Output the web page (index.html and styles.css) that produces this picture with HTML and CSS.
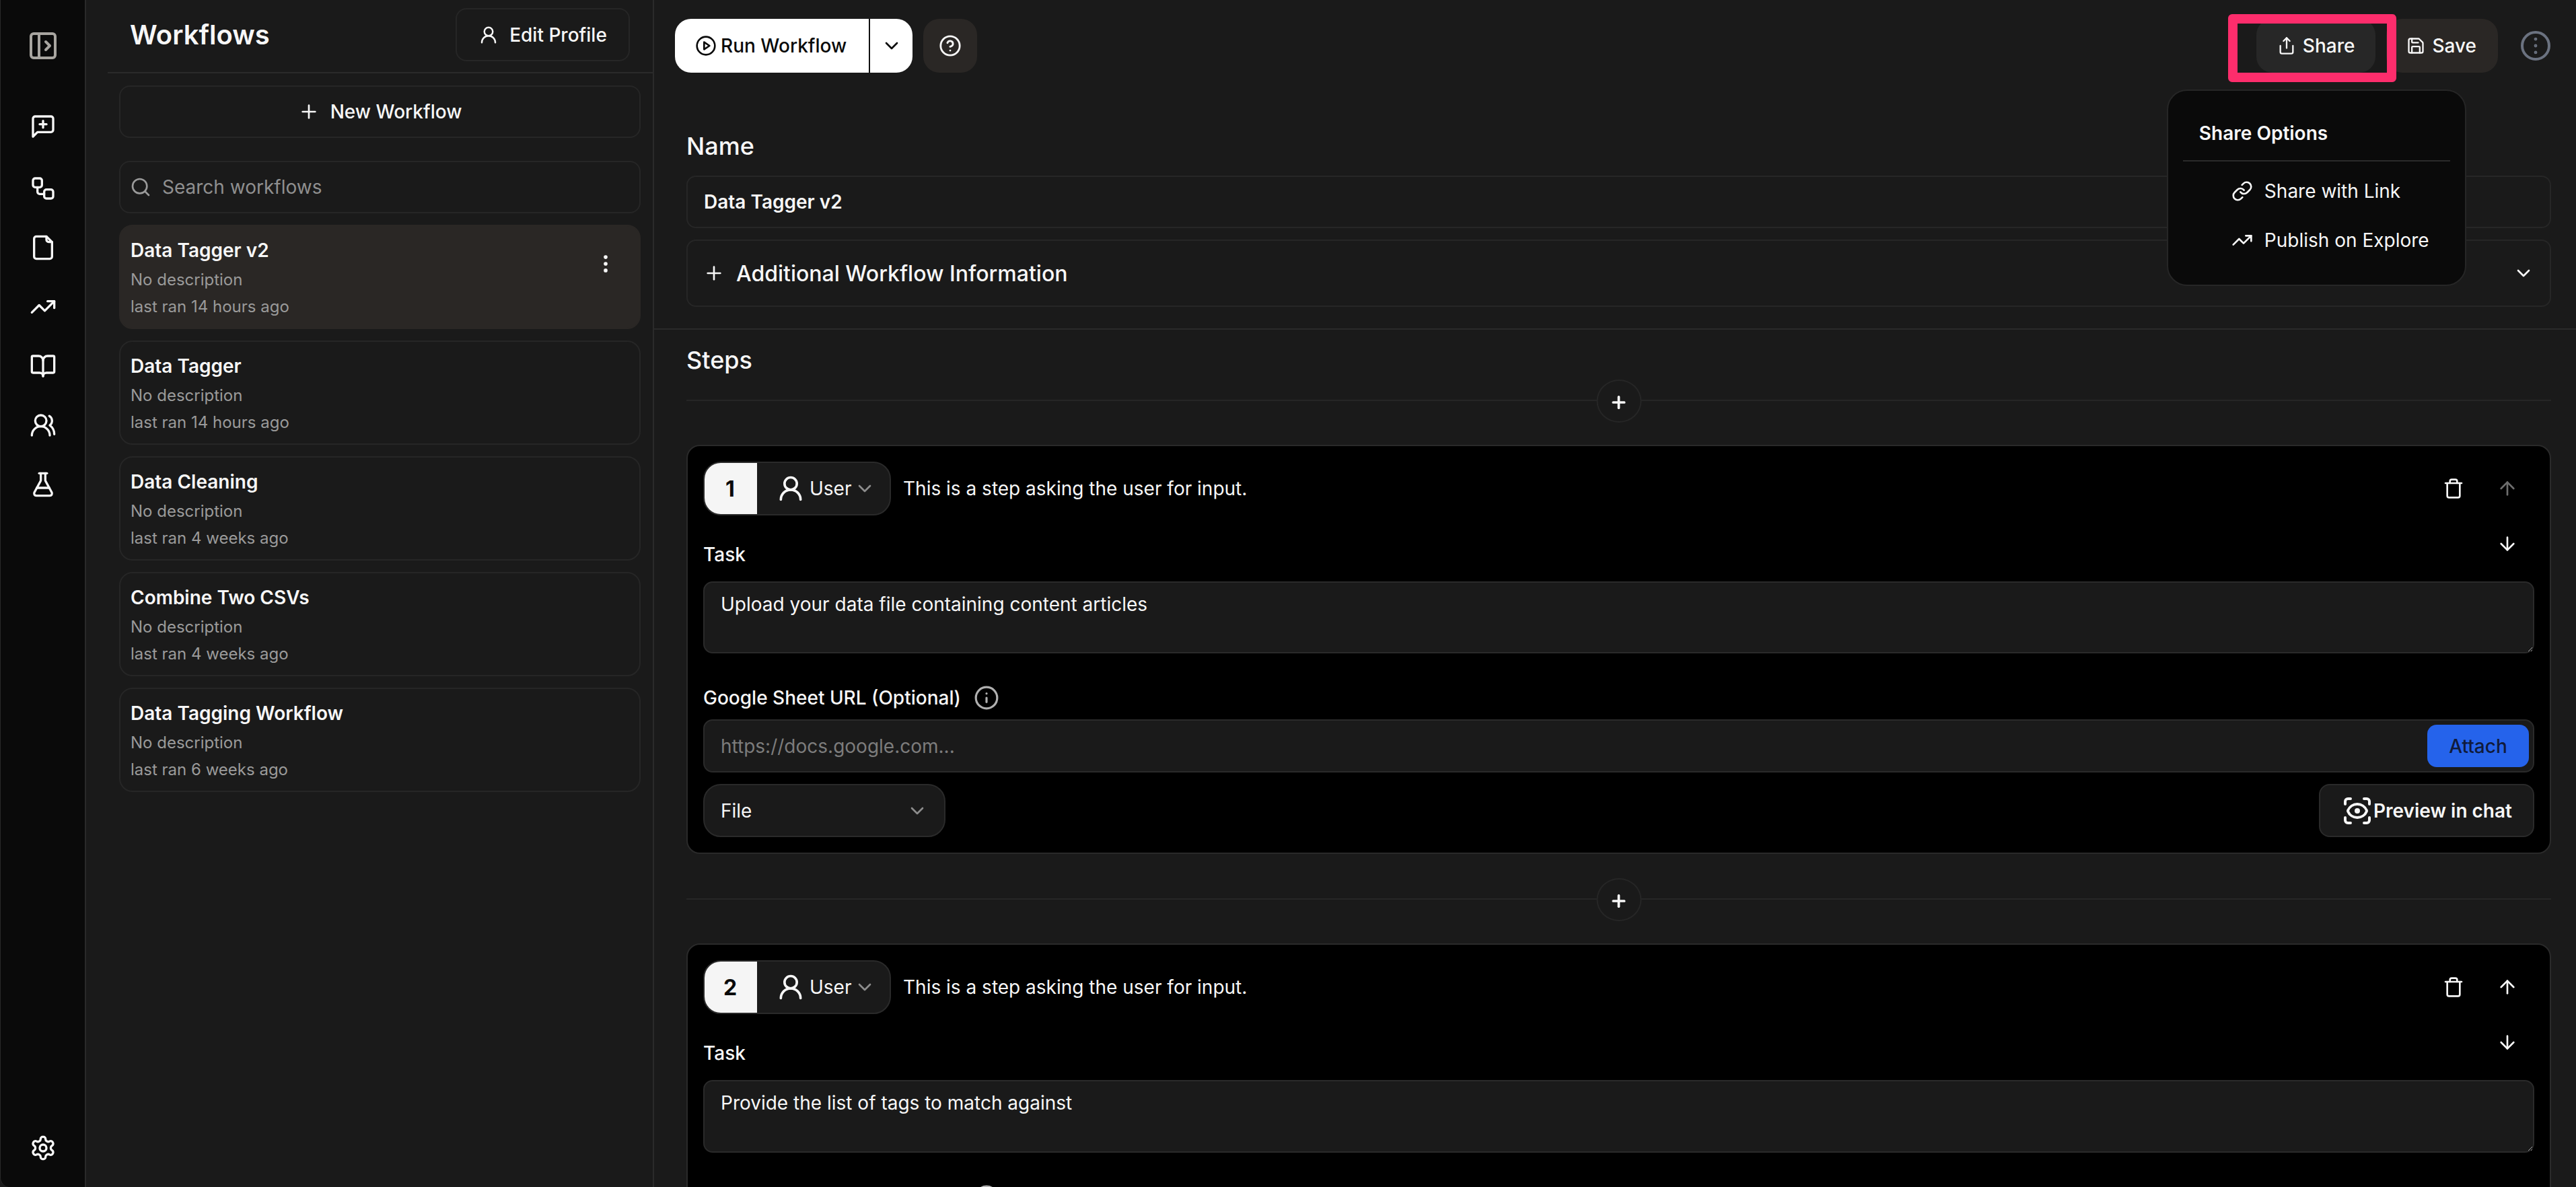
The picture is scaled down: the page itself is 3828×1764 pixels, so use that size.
FILE: index.html
```html
<!DOCTYPE html>
<html lang="en">
<head>
<meta charset="utf-8">
<title>Workflows</title>
<link rel="stylesheet" href="styles.css">
</head>
<body>
<svg class="sprite" xmlns="http://www.w3.org/2000/svg">
  <symbol id="i-panel" viewBox="0 0 24 24"><rect x="3" y="3" width="18" height="18" rx="2"/><path d="M9 3v18"/><path d="m14 9 3 3-3 3"/></symbol>
  <symbol id="i-message" viewBox="0 0 24 24"><path d="M21 15a2 2 0 0 1-2 2H7l-4 4V5a2 2 0 0 1 2-2h14a2 2 0 0 1 2 2z"/><path d="M12 7v6"/><path d="M9 10h6"/></symbol>
  <symbol id="i-workflow" viewBox="0 0 24 24"><rect x="3" y="3" width="8" height="8" rx="2"/><path d="M7 11v4a2 2 0 0 0 2 2h4"/><rect x="13" y="13" width="8" height="8" rx="2"/></symbol>
  <symbol id="i-file" viewBox="0 0 24 24"><path d="M15 2H6a2 2 0 0 0-2 2v16a2 2 0 0 0 2 2h12a2 2 0 0 0 2-2V7Z"/><path d="M15 2v3a2 2 0 0 0 2 2h3"/></symbol>
  <symbol id="i-trend" viewBox="0 0 24 24"><path d="M22 7l-8.500 8.500-5-5L2 17"/><path d="M16 7h6v6"/></symbol>
  <symbol id="i-book" viewBox="0 0 24 24"><path d="M12 7v14"/><path d="M3 18a1 1 0 0 1-1-1V4a1 1 0 0 1 1-1h5a4 4 0 0 1 4 4 4 4 0 0 1 4-4h5a1 1 0 0 1 1 1v13a1 1 0 0 1-1 1h-6a3 3 0 0 0-3 3 3 3 0 0 0-3-3z"/></symbol>
  <symbol id="i-users" viewBox="0 0 24 24"><path d="M18 21a8 8 0 0 0-16 0"/><circle cx="10" cy="8" r="5"/><path d="M22 20c0-3.370-2-6.500-4-8a5 5 0 0 0-.450-8.300"/></symbol>
  <symbol id="i-flask" viewBox="0 0 24 24"><path d="M14 2v6a2 2 0 0 0 .245.960l5.510 10.080A2 2 0 0 1 18 22H6a2 2 0 0 1-1.755-2.960l5.510-10.080A2 2 0 0 0 10 8V2"/><path d="M6.453 15h11.094"/><path d="M8.500 2h7"/></symbol>
  <symbol id="i-gear" viewBox="0 0 24 24"><path d="M12.220 2h-.44a2 2 0 0 0-2 2v.18a2 2 0 0 1-1 1.730l-.43.25a2 2 0 0 1-2 0l-.15-.08a2 2 0 0 0-2.730.73l-.22.38a2 2 0 0 0 .73 2.730l.15.1a2 2 0 0 1 1 1.720v.51a2 2 0 0 1-1 1.740l-.15.09a2 2 0 0 0-.73 2.730l.22.38a2 2 0 0 0 2.730.73l.15-.08a2 2 0 0 1 2 0l.43.25a2 2 0 0 1 1 1.730V20a2 2 0 0 0 2 2h.44a2 2 0 0 0 2-2v-.18a2 2 0 0 1 1-1.730l.43-.25a2 2 0 0 1 2 0l.15.08a2 2 0 0 0 2.730-.73l.22-.39a2 2 0 0 0-.73-2.730l-.15-.08a2 2 0 0 1-1-1.740v-.5a2 2 0 0 1 1-1.740l.15-.09a2 2 0 0 0 .73-2.730l-.22-.38a2 2 0 0 0-2.730-.73l-.15.08a2 2 0 0 1-2 0l-.43-.25a2 2 0 0 1-1-1.730V4a2 2 0 0 0-2-2z"/><circle cx="12" cy="12" r="3"/></symbol>
  <symbol id="i-user" viewBox="0 0 24 24"><circle cx="12" cy="8" r="5"/><path d="M20 21a8 8 0 0 0-16 0"/></symbol>
  <symbol id="i-plus" viewBox="0 0 24 24"><path d="M5 12h14"/><path d="M12 5v14"/></symbol>
  <symbol id="i-search" viewBox="0 0 24 24"><circle cx="11" cy="11" r="8"/><path d="m21 21-4.300-4.300"/></symbol>
  <symbol id="i-dots" viewBox="0 0 24 24"><circle cx="12" cy="12" r="1"/><circle cx="12" cy="5" r="1"/><circle cx="12" cy="19" r="1"/></symbol>
  <symbol id="i-play" viewBox="0 0 24 24"><circle cx="12" cy="12" r="10"/><path d="m10 8 6 4-6 4z"/></symbol>
  <symbol id="i-chevron" viewBox="0 0 24 24"><path d="m6 9 6 6 6-6"/></symbol>
  <symbol id="i-help" viewBox="0 0 24 24"><circle cx="12" cy="12" r="10"/><path d="M9.090 9a3 3 0 0 1 5.830 1c0 2-3 3-3 3"/><path d="M12 17h.01"/></symbol>
  <symbol id="i-share" viewBox="0 0 24 24"><path d="M12 2v13"/><path d="m16 6-4-4-4 4"/><path d="M4 12v8a2 2 0 0 0 2 2h12a2 2 0 0 0 2-2v-8"/></symbol>
  <symbol id="i-save" viewBox="0 0 24 24"><path d="M15.200 3a2 2 0 0 1 1.400.6l3.800 3.800a2 2 0 0 1 .6 1.400V19a2 2 0 0 1-2 2H5a2 2 0 0 1-2-2V5a2 2 0 0 1 2-2z"/><path d="M17 21v-7a1 1 0 0 0-1-1H8a1 1 0 0 0-1 1v7"/><path d="M7 3v4a1 1 0 0 0 1 1h7"/></symbol>
  <symbol id="i-link" viewBox="0 0 24 24"><path d="M10 13a5 5 0 0 0 7.540.54l3-3a5 5 0 0 0-7.070-7.070l-1.720 1.710"/><path d="M14 11a5 5 0 0 0-7.540-.54l-3 3a5 5 0 0 0 7.070 7.070l1.710-1.710"/></symbol>
  <symbol id="i-trash" viewBox="0 0 24 24"><path d="M3 6h18"/><path d="M19 6v14a2 2 0 0 1-2 2H7a2 2 0 0 1-2-2V6"/><path d="M8 6V4a2 2 0 0 1 2-2h4a2 2 0 0 1 2 2v2"/></symbol>
  <symbol id="i-up" viewBox="0 0 24 24"><path d="m5 12 7-7 7 7"/><path d="M12 19V5"/></symbol>
  <symbol id="i-down" viewBox="0 0 24 24"><path d="M12 5v14"/><path d="m19 12-7 7-7-7"/></symbol>
  <symbol id="i-info" viewBox="0 0 24 24"><circle cx="12" cy="12" r="10"/><path d="M12 16v-4"/><path d="M12 8h.01"/></symbol>
  <symbol id="i-eye" viewBox="0 0 24 24"><path d="M3 7V5a2 2 0 0 1 2-2h2"/><path d="M17 3h2a2 2 0 0 1 2 2v2"/><path d="M21 17v2a2 2 0 0 1-2 2h-2"/><path d="M7 21H5a2 2 0 0 1-2-2v-2"/><circle cx="12" cy="12" r="1"/><path d="M18.944 12.330a1 1 0 0 0 0-.66 7.500 7.500 0 0 0-13.888 0 1 1 0 0 0 0 .66 7.500 7.500 0 0 0 13.888 0"/></symbol>
</svg>

<nav class="rail">
  <svg class="icon rail-toggle"><use href="#i-panel"/></svg>
  <svg class="icon rail-icon"><use href="#i-message"/></svg>
  <svg class="icon rail-icon rail-workflow"><use href="#i-workflow"/></svg>
  <svg class="icon rail-icon"><use href="#i-file"/></svg>
  <svg class="icon rail-icon"><use href="#i-trend"/></svg>
  <svg class="icon rail-icon"><use href="#i-book"/></svg>
  <svg class="icon rail-icon"><use href="#i-users"/></svg>
  <svg class="icon rail-icon"><use href="#i-flask"/></svg>
  <svg class="icon rail-icon rail-settings"><use href="#i-gear"/></svg>
</nav>

<aside class="list-panel">
  <header class="list-header">
    <h1 class="list-title">Workflows</h1>
    <button class="btn-outline btn-profile"><svg class="icon icon-30"><use href="#i-user"/></svg>Edit Profile</button>
  </header>
  <div class="list-body">
    <button class="btn-outline btn-new"><svg class="icon icon-32"><use href="#i-plus"/></svg>New Workflow</button>
    <label class="search">
      <svg class="icon icon-32 search-icon"><use href="#i-search"/></svg>
      <input class="search-input" type="text" placeholder="Search workflows">
    </label>
    <div class="wf-items">
      <article class="wf-card wf-card-active">
        <div class="wf-text">
          <div class="wf-name">Data Tagger v2</div>
          <div class="wf-meta">No description</div>
          <div class="wf-meta">last ran 14 hours ago</div>
        </div>
        <svg class="icon icon-dots"><use href="#i-dots"/></svg>
      </article>
      <article class="wf-card">
        <div class="wf-text">
          <div class="wf-name">Data Tagger</div>
          <div class="wf-meta">No description</div>
          <div class="wf-meta">last ran 14 hours ago</div>
        </div>
      </article>
      <article class="wf-card">
        <div class="wf-text">
          <div class="wf-name">Data Cleaning</div>
          <div class="wf-meta">No description</div>
          <div class="wf-meta">last ran 4 weeks ago</div>
        </div>
      </article>
      <article class="wf-card">
        <div class="wf-text">
          <div class="wf-name">Combine Two CSVs</div>
          <div class="wf-meta">No description</div>
          <div class="wf-meta">last ran 4 weeks ago</div>
        </div>
      </article>
      <article class="wf-card">
        <div class="wf-text">
          <div class="wf-name">Data Tagging Workflow</div>
          <div class="wf-meta">No description</div>
          <div class="wf-meta">last ran 6 weeks ago</div>
        </div>
      </article>
    </div>
  </div>
</aside>

<main class="main">
  <div class="topbar">
    <div class="topbar-group">
      <div class="run-split">
        <button class="run-btn"><svg class="icon icon-32"><use href="#i-play"/></svg>Run Workflow</button>
        <button class="run-caret"><svg class="icon icon-32"><use href="#i-chevron"/></svg></button>
      </div>
      <button class="btn-soft btn-help"><svg class="icon icon-34"><use href="#i-help"/></svg></button>
    </div>
    <div class="topbar-group topbar-right">
      <div class="share-wrap">
        <button class="btn-soft btn-share"><svg class="icon icon-28"><use href="#i-share"/></svg>Share</button>
        <div class="highlight"></div>
        <div class="share-menu">
          <div class="share-menu-title">Share Options</div>
          <div class="share-menu-item"><svg class="icon icon-32"><use href="#i-link"/></svg>Share with Link</div>
          <div class="share-menu-item"><svg class="icon icon-32"><use href="#i-trend"/></svg>Publish on Explore</div>
        </div>
      </div>
      <button class="btn-soft btn-save"><svg class="icon icon-28"><use href="#i-save"/></svg>Save</button>
      <button class="btn-more"><svg class="icon more-dots"><use href="#i-dots"/></svg></button>
    </div>
  </div>

  <section class="section section-name">
    <h2 class="section-title">Name</h2>
    <input class="name-input" type="text" value="Data Tagger v2">
    <div class="additional">
      <svg class="icon icon-32"><use href="#i-plus"/></svg>
      <span class="additional-label">Additional Workflow Information</span>
      <svg class="icon icon-32"><use href="#i-chevron"/></svg>
    </div>
  </section>

  <div class="rule"></div>

  <section class="section">
    <h2 class="section-title section-title-steps">Steps</h2>

    <div class="adder adder-first"><button class="adder-btn"><svg class="icon icon-28 icon-bold"><use href="#i-plus"/></svg></button></div>

    <article class="step">
      <div class="step-head">
        <div class="step-pill">
          <span class="step-num">1</span>
          <span class="step-role"><svg class="icon icon-role"><use href="#i-user"/></svg>User<svg class="icon icon-32 role-caret"><use href="#i-chevron"/></svg></span>
        </div>
        <p class="step-desc">This is a step asking the user for input.</p>
        <div class="step-actions">
          <svg class="icon icon-32"><use href="#i-trash"/></svg>
          <svg class="icon icon-32 icon-muted"><use href="#i-up"/></svg>
          <svg class="icon icon-32 step-down"><use href="#i-down"/></svg>
        </div>
      </div>
      <div class="field-label field-label-task">Task</div>
      <textarea class="task-area" readonly>Upload your data file containing content articles</textarea>
      <div class="field-label field-label-url">Google Sheet URL (Optional)<svg class="icon icon-info"><use href="#i-info"/></svg></div>
      <div class="url-box">
        <input class="url-input" type="text" placeholder="https://docs.google.com...">
        <button class="btn-attach">Attach</button>
      </div>
      <div class="step-foot">
        <div class="type-select">File<svg class="icon icon-32 role-caret"><use href="#i-chevron"/></svg></div>
        <button class="btn-preview"><svg class="icon icon-48"><use href="#i-eye"/></svg>Preview in chat</button>
      </div>
    </article>

    <div class="adder"><button class="adder-btn"><svg class="icon icon-28 icon-bold"><use href="#i-plus"/></svg></button></div>

    <article class="step">
      <div class="step-head">
        <div class="step-pill">
          <span class="step-num">2</span>
          <span class="step-role"><svg class="icon icon-role"><use href="#i-user"/></svg>User<svg class="icon icon-32 role-caret"><use href="#i-chevron"/></svg></span>
        </div>
        <p class="step-desc">This is a step asking the user for input.</p>
        <div class="step-actions">
          <svg class="icon icon-32"><use href="#i-trash"/></svg>
          <svg class="icon icon-32"><use href="#i-up"/></svg>
          <svg class="icon icon-32 step-down"><use href="#i-down"/></svg>
        </div>
      </div>
      <div class="field-label field-label-task">Task</div>
      <textarea class="task-area task-area-tall" readonly>Provide the list of tags to match against</textarea>
      <div class="field-label field-label-url">Google Sheet URL (Optional)<svg class="icon icon-info"><use href="#i-info"/></svg></div>
    </article>
  </section>
</main>
</body>
</html>
```

FILE: styles.css
```css
* { box-sizing: border-box; }

html, body {
  margin: 0;
  height: 100%;
  overflow: hidden;
}

body {
  display: flex;
  background: #1a1a1a;
  color: #f7f7f7;
  font-family: Inter, "Liberation Sans", sans-serif;
  font-size: 28px;
  color-scheme: dark;
}

button, input, textarea {
  font: inherit;
  color: inherit;
}

button { cursor: pointer; padding: 0; }

.sprite { display: none; }

.icon {
  flex: none;
  display: block;
  fill: none;
  stroke: currentColor;
  stroke-width: 2;
  stroke-linecap: round;
  stroke-linejoin: round;
}
.icon-28 { width: 28px; height: 28px; }
.icon-30 { width: 30px; height: 30px; }
.icon-32 { width: 32px; height: 32px; }
.icon-34 { width: 34px; height: 34px; }
.icon-48 { width: 48px; height: 48px; }
.icon-bold { stroke-width: 3.2; }
.icon-muted { color: #6e6e6e; }

/* Left rail */
.rail {
  flex: none;
  width: 128px;
  display: flex;
  flex-direction: column;
  align-items: center;
  gap: 48px;
  padding: 44px 0 38px;
  background: #0a0a0a;
  border-right: 2px solid #2a2a2a;
  border-left: 1px solid #2a2a2a;
  border-bottom-left-radius: 14px;
}
.rail-icon { width: 40px; height: 40px; }
.rail-toggle { width: 48px; height: 48px; color: #a8a5a0; margin-bottom: 28px; }
.rail-workflow { margin-top: 4px; }
.rail-settings { margin-top: auto; }

/* Workflow list */
.list-panel {
  flex: none;
  width: 844px;
  border-right: 2px solid #2a2a2a;
}
.list-header {
  height: 109px;
  margin-left: 32px;
  padding: 12px 34px 0 33px;
  display: flex;
  justify-content: space-between;
  border-bottom: 2px solid #2a2a2a;
}
.list-title {
  margin: 0;
  font-size: 40px;
  line-height: 80px;
  font-weight: 600;
}
.btn-outline {
  display: flex;
  align-items: center;
  justify-content: center;
  background: transparent;
  border: 2px solid #262626;
  border-radius: 16px;
  font-weight: 500;
}
.btn-profile {
  width: 259px;
  height: 79px;
  gap: 16px;
}
.list-body {
  padding: 18px 18px 0 49px;
}
.btn-new {
  width: 100%;
  height: 78px;
  gap: 16px;
}
.search {
  margin-top: 34px;
  height: 78px;
  display: flex;
  align-items: center;
  gap: 16px;
  padding: 0 14px;
  border: 2px solid #262626;
  border-radius: 16px;
}
.search-icon { color: #9a9a9a; }
.search-input {
  flex: 1;
  min-width: 0;
  padding: 0;
  border: 0;
  outline: 0;
  background: transparent;
}
.search-input::placeholder { color: #8f8f8f; opacity: 1; }

.wf-items {
  margin-top: 17px;
  display: flex;
  flex-direction: column;
  gap: 17px;
}
.wf-card {
  display: flex;
  justify-content: space-between;
  align-items: flex-start;
  padding: 18px 33px 11px 15px;
  border: 2px solid #262626;
  border-radius: 20px;
}
.wf-card-active {
  background: #2a2725;
  border-color: #2a2725;
}
.wf-name {
  line-height: 36px;
  margin-bottom: 6px;
  font-weight: 600;
}
.wf-meta {
  font-size: 24px;
  line-height: 40px;
  color: #9a9a9a;
}
.icon-dots { width: 34px; height: 34px; margin-top: 21px; }

/* Main */
.main {
  flex: 1;
  min-width: 0;
}
.topbar {
  display: flex;
  justify-content: space-between;
  padding: 28px 38px 0 31px;
}
.topbar-group {
  display: flex;
  align-items: center;
  gap: 16px;
}
.run-split {
  display: flex;
  height: 80px;
  border-radius: 24px;
  overflow: hidden;
  background: #fff;
  color: #0a0a0a;
}
.run-btn {
  display: flex;
  align-items: center;
  gap: 6px;
  padding: 0 33px 0 30px;
  border: 0;
  border-right: 2px solid #111;
  background: transparent;
  font-weight: 500;
}
.run-caret {
  width: 63px;
  display: flex;
  align-items: center;
  justify-content: center;
  border: 0;
  background: transparent;
}
.btn-soft {
  height: 80px;
  display: flex;
  align-items: center;
  justify-content: center;
  gap: 10px;
  border: 0;
  border-radius: 24px;
  background: #2a2725;
  font-weight: 500;
}
.btn-help { width: 80px; }
.btn-share {
  padding: 0 31px;
  background: #272727;
}
.btn-save { padding: 0 32px 0 30px; }
.btn-more {
  width: 44px;
  height: 44px;
  margin-left: 18px;
  display: flex;
  align-items: center;
  justify-content: center;
  border: 4px solid #6b7280;
  border-radius: 50%;
  background: transparent;
}
.more-dots {
  width: 34px;
  height: 34px;
  color: #6b7280;
  stroke-width: 1.4;
}

.share-wrap { position: relative; }
.highlight {
  position: absolute;
  left: -42px;
  top: -7px;
  width: 250px;
  height: 101px;
  border: 14px solid #fd2d6c;
  border-radius: 6px;
  pointer-events: none;
}
.share-menu {
  position: absolute;
  left: -133px;
  top: 105px;
  width: 445px;
  height: 292px;
  padding: 0 22px;
  background: #0a0a0a;
  border: 2px solid #262626;
  border-radius: 30px;
  z-index: 2;
}
.share-menu-title {
  height: 105px;
  padding: 46px 0 0 24px;
  line-height: 34px;
  font-weight: 600;
  border-bottom: 2px solid #2a2a2a;
}
.share-menu-item {
  display: flex;
  align-items: center;
  gap: 17px;
  height: 73px;
  padding-left: 72px;
}
.share-menu-title + .share-menu-item { margin-top: 7px; }

.section { padding: 0 37px 0 48px; }
.section-title {
  margin: 0;
  font-size: 36px;
  line-height: 44px;
  font-weight: 500;
}
.section-name { padding-top: 87px; }
.name-input {
  display: block;
  width: 100%;
  height: 78px;
  margin-top: 22px;
  padding: 0 24px;
  border: 2px solid #262626;
  border-radius: 14px;
  background: transparent;
  font-weight: 600;
  outline: 0;
}
.additional {
  height: 100px;
  margin-top: 17px;
  padding: 0 23px;
  display: flex;
  align-items: center;
  gap: 17px;
  border: 2px solid #262626;
  border-radius: 14px;
}
.additional-label {
  flex: 1;
  font-size: 32px;
  font-weight: 500;
}
.rule {
  height: 2px;
  margin-top: 32px;
  background: #2a2a2a;
}
.section-title-steps { margin-top: 23px; }

.adder {
  position: relative;
  height: 67px;
  margin-top: 66px;
  border-top: 2px solid #262626;
}
.adder-first { margin-top: 37px; }
.adder-btn {
  position: absolute;
  left: 50%;
  top: -32px;
  width: 67px;
  height: 64px;
  padding-top: 4px;
  transform: translateX(-50%);
  display: flex;
  align-items: center;
  justify-content: center;
  background: #1a1a1a;
  border: 2px solid #262626;
  border-radius: 50%;
}

.step {
  padding: 23px;
  background: #000;
  border: 2px solid #2a2a2a;
  border-radius: 20px;
}
.step-head {
  height: 80px;
  display: flex;
  align-items: center;
}
.step-pill {
  display: flex;
  height: 80px;
  border: 2px solid #2a2a2a;
  border-radius: 26px;
  overflow: hidden;
  background: #1a1a1a;
}
.step-num {
  width: 80px;
  margin: -2px 0 -2px -2px;
  display: flex;
  align-items: center;
  justify-content: center;
  background: #f5f5f5;
  color: #0a0a0a;
  font-size: 32px;
  font-weight: 700;
}
.step-role {
  display: flex;
  align-items: center;
  width: 197px;
  padding-left: 28px;
}
.icon-role { width: 44px; height: 44px; margin-right: 6px; }
.role-caret { color: #8c8c8c; }
.step-role .role-caret { margin-left: 4px; }
.step-desc {
  flex: 1;
  margin: 0 0 0 18px;
}
.step-actions {
  flex: none;
  align-self: flex-start;
  display: grid;
  grid-template-columns: 80px 80px;
  grid-auto-rows: 80px;
  row-gap: 2px;
  justify-items: center;
  align-items: center;
}
.step-down { grid-column: 2; }

.field-label {
  display: flex;
  align-items: center;
  height: 34px;
  line-height: 34px;
  font-weight: 500;
}
.field-label-task { margin-top: 41px; }
.field-label-url { margin-top: 49px; }
.icon-info { width: 38px; height: 38px; margin-left: 19px; color: #b0b0b0; }

.task-area {
  display: block;
  width: 100%;
  height: 107px;
  margin-top: 23px;
  padding: 15px 24px;
  line-height: 34px;
  background: #1a1a1a;
  border: 2px solid #2a2a2a;
  border-radius: 14px;
  outline: 0;
}
.task-area-tall { height: 108px; }

.url-box {
  display: flex;
  align-items: center;
  height: 79px;
  margin-top: 15px;
  padding: 0 6px 0 24px;
  background: #1a1a1a;
  border: 2px solid #2a2a2a;
  border-radius: 14px;
}
.url-input {
  flex: 1;
  min-width: 0;
  padding: 0;
  border: 0;
  outline: 0;
  background: transparent;
}
.url-input::placeholder { color: #7c7c7c; opacity: 1; }
.btn-attach {
  width: 151px;
  height: 63px;
  border: 0;
  border-radius: 14px;
  background: #2563eb;
  color: #101b3b;
  font-weight: 500;
}

.step-foot {
  display: flex;
  justify-content: space-between;
  margin-top: 17px;
}
.type-select {
  display: flex;
  align-items: center;
  justify-content: space-between;
  width: 360px;
  height: 79px;
  padding: 0 24px;
  background: #1a1a1a;
  border: 2px solid #2a2a2a;
  border-radius: 26px;
}
.btn-preview {
  display: flex;
  align-items: center;
  justify-content: center;
  width: 320px;
  height: 79px;
  background: #1a1a1a;
  border: 2px solid #2a2a2a;
  border-radius: 16px;
  font-weight: 600;
}
```
